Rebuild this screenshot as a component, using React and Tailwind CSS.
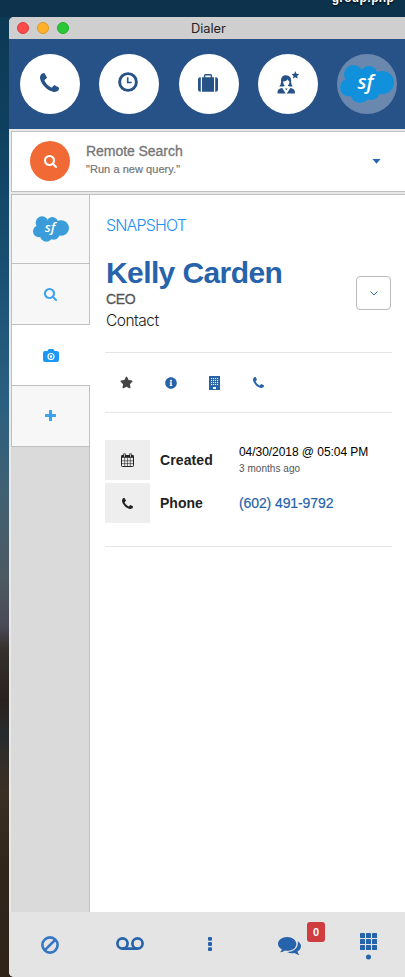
import React from "react";
import { FaStar, FaInfoCircle } from "react-icons/fa";

const PHONE =
  "M1408 1112q0 27-10 70.5t-21 68.5q-21 50-122 106-94 51-186 51-27 0-53-3.5t-57-12.5-47-14.5-55.5-20.5-49.5-18q-98-35-175-83-127-79-264-216t-216-264q-48-77-83-175-3-9-18-49.5t-20.5-55.5-14.5-47-12.5-57-3.5-53q0-92 51-186 56-101 106-122 25-11 68.5-21t70.5-10q14 0 21 3 18 6 53 76 11 19 30 54t35 63.5 31 53.5q3 4 17.5 25t21.5 35.5 7 28.5q0 20-28.5 50t-62 55-62 53-28.5 46q0 9 5 22.5t8.5 20.5 14 24 11.5 19q76 137 174 235t235 174q2 1 19 11.5t24 14 20.5 8.5 22.5 5q18 0 46-28.5t53-62 55-62 50-28.5q14 0 28.5 7t35.5 21.5 25 17.5q25 15 53.5 31t63.5 35 54 30q70 35 76 53 3 7 3 21z";

const SEARCH =
  "M1216 832q0-185-131.5-316.5t-316.5-131.5-316.5 131.5-131.5 316.5 131.5 316.5 316.5 131.5 316.5-131.5 131.5-316.5zm512 832q0 52-38 90t-90 38q-54 0-90-38l-343-342q-179 124-399 124-143 0-273.5-55.5t-225-150-150-225-55.5-273.5 55.5-273.5 150-225 225-150 273.5-55.5 273.5 55.5 225 150 150 225 55.5 273.5q0 220-124 399l343 343q37 37 37 90z";

function Phone({ className }) {
  return (
    <svg viewBox="0 0 1408 1408" className={className} fill="currentColor">
      <path d={PHONE} />
    </svg>
  );
}

function Search({ className }) {
  return (
    <svg viewBox="64 128 1664 1664" className={className} fill="currentColor">
      <path d={SEARCH} />
    </svg>
  );
}

function Clock() {
  return (
    <svg viewBox="0 0 20 20" className="size-5" fill="none" stroke="currentColor">
      <circle cx="10" cy="10" r="8.4" strokeWidth="2.9" />
      <path d="M9.7 5.2v5.3h4" strokeWidth="1.6" />
    </svg>
  );
}

function Suitcase() {
  return (
    <svg viewBox="0 0 20 18" className="mt-0.5 h-[18px] w-5" fill="currentColor">
      <path d="M6.6 4V1.6Q6.6.7 7.5.7h5q.9 0 .9.9V4" fill="none" stroke="currentColor" strokeWidth="1.4" />
      <path d="M2.8 3.3v14.4H2.2Q0 17.700 0 15.500V5.500Q0 3.300 2.200 3.300zM4 3.300h12v14.400H4zM17.200 3.300h.6Q20 3.300 20 5.500v10q0 2.200-2.200 2.200h-.6z" />
    </svg>
  );
}

function Agent() {
  return (
    <svg viewBox="0 0 22 23" className="h-[23px] w-[22px]" fill="currentColor">
      <path d="M9 4.300C5.600 4.200 4.100 6.400 4.100 9.500c0 2-.1 4.100-1.800 6h4.200l1.300-1.100C6.600 13.400 6.100 12 6.100 10.400c2.600-.1 3.900-1 4.700-2.200.3 1.200 1 1.900 1.700 2.200 0 1.600-.6 3-1.700 4l1.200 1.100h3.700c-1.500-2-1.600-4-1.600-6 0-3.300-1.700-5.100-5.100-5.200z" />
      <path d="M.5 22.500c0-3.700.8-4.400 4.700-5.400l3.500 5.400zM18 22.500c0-3.700-.8-4.400-4.700-5.400l-3.500 5.400zM8 17.600h2.600l-1.300 1.600z" />
      <path d="M18.300.300l1.200 2.500 2.600.3-1.900 1.800.5 2.600-2.400-1.200L16 7.500l.5-2.600-1.900-1.800 2.600-.3z" />
    </svg>
  );
}

function SfLogo({ className, fill }) {
  return (
    <svg viewBox="0 0 54 38" className={className}>
      <g fill={fill}>
        <circle cx="13.500" cy="9.500" r="9.500" />
        <circle cx="29" cy="9.500" r="8.500" />
        <ellipse cx="42" cy="17.500" rx="12" ry="11.500" />
        <circle cx="9" cy="22.500" r="9" />
        <circle cx="20" cy="28.500" r="9.500" />
        <circle cx="31" cy="26" r="9" />
        <rect x="12" y="9" width="28" height="20" />
      </g>
      <text x="25.500" y="23.500" textAnchor="middle" fill="#fff" fontFamily="'Open Sans', sans-serif" fontSize="20" fontStyle="italic" fontWeight="600">
        sf
      </text>
    </svg>
  );
}

function Camera() {
  return (
    <svg viewBox="0 0 16 13" className="h-[13px] w-4" fill="currentColor">
      <path fillRule="evenodd" d="M2 2h2.500L5.200.6Q5.500 0 6.200 0h3.600q.7 0 1 .6L11.500 2H14q2 0 2 2v7q0 2-2 2H2q-2 0-2-2V4q0-2 2-2zM8 3.900a3.600 3.600 0 100 7.200 3.600 3.600 0 000-7.200z" />
      <circle cx="8" cy="7.500" r="1.800" fill="none" stroke="currentColor" strokeWidth="1.200" />
    </svg>
  );
}

function Building() {
  return (
    <svg viewBox="0 0 11 14" className="h-3.5 w-[11px]">
      <rect width="11" height="14" fill="currentColor" />
      <g fill="#fff">
        {[2, 4, 6, 8].map((y) => [2, 4, 6, 8].map((x) => <rect key={x + "-" + y} x={x} y={y} width="1.100" height="1.100" />))}
        <rect x="4" y="11" width="3" height="2" />
      </g>
    </svg>
  );
}

function Calendar() {
  return (
    <svg viewBox="0 0 13 14" className="h-3.5 w-[13px]" fill="none" stroke="currentColor">
      <rect x=".5" y="2.500" width="12" height="11" rx=".8" />
      <path d="M.5 3.500h12" strokeWidth="2.600" />
      <path d="M3.700 5v8.500M6.500 5v8.500M9.300 5v8.500M.5 7.800h12M.5 10.600h12" strokeWidth=".6" />
      <path d="M3.500 4V.6M9.500 4V.6" strokeWidth="2.400" />
      <path d="M3.500 3.800V1.200M9.500 3.800V1.200" stroke="#eee" strokeWidth=".8" />
    </svg>
  );
}

function Chats() {
  return (
    <svg viewBox="0 0 24 19" className="h-[19px] w-6" fill="currentColor">
      <path d="M9.200 0c5 0 9.100 3 9.100 6.900s-4.100 6.900-9.100 6.900c-.8 0-1.600-.1-2.400-.2-1.400 1-2.900 1.600-4.800 1.700 1-1 1.700-1.800 1.900-3C1.500 11 0 9.100 0 6.900 0 3 4.100 0 9.200 0z" />
      <path d="M19.700 4.200c2 1.200 3.300 3 3.300 5 0 2.100-1.400 4-3.500 5.200.3 1.500 1 2.400 2.200 3.600-2-.2-3.600-.8-5-2-2.700.5-5.600 0-7.600-1.100 6.500.1 11.800-4.200 10.600-10.700z" />
    </svg>
  );
}

const DIGITS = [0, 1, 2];

export default function App() {
  return (
    <div className="flex h-[977px] w-[405px] flex-col overflow-hidden bg-[linear-gradient(180deg,#0b3852_0px,#0f405f_130px,#184f70_260px,#2a5f80_400px,#406073_490px,#4c5961_580px,#4a4a55_626px,#35312c_650px,#29231e_700px,#272b2d_735px,#3b3024_790px,#30261a_870px,#302419_977px)] font-['Liberation_Sans',Arial,sans-serif]">
      <div className="flex h-[17px] shrink-0 justify-end bg-[#0c334b] pr-[11px]">
        <span className="-mt-[10px] h-5 text-[12px] leading-4 font-bold tracking-[0.250px] text-white [text-shadow:0_1px_2px_#000]">group!php</span>
      </div>
      <div className="ml-[9px] flex w-[396px] flex-1 flex-col overflow-hidden rounded-l-[5px] bg-[#e8e8e8]">
        <div className="flex h-[22px] shrink-0 items-center bg-[#cfcfcf] pl-2">
          <div className="flex gap-2">
            <i className="size-3 rounded-full border border-[#e2383a] bg-[#fc4b4b]" />
            <i className="size-3 rounded-full border border-[#e09a1e] bg-[#fdb12b]" />
            <i className="size-3 rounded-full border border-[#1fae2b] bg-[#2ac837]" />
          </div>
          <span className="ml-[122px] pt-px font-['Inter',sans-serif] text-[12.800px] leading-[22px] text-[#222]">Dialer</span>
        </div>

        <nav className="flex h-[90px] w-[409px] shrink-0 items-center gap-[19.350px] bg-[#275288] pl-[11px] text-[#275288]">
          <div className="flex size-[60px] shrink-0 items-center justify-center rounded-full bg-white pr-0.5 pb-1">
            <Phone className="size-[19px]" />
          </div>
          <div className="flex size-[60px] shrink-0 items-center justify-center rounded-full bg-white pr-0.5 pb-1">
            <Clock />
          </div>
          <div className="flex size-[60px] shrink-0 items-center justify-center rounded-full bg-white pr-px pb-1">
            <Suitcase />
          </div>
          <div className="flex size-[60px] shrink-0 items-center justify-center rounded-full bg-white pr-px pb-1">
            <Agent />
          </div>
          <div className="flex size-[60px] shrink-0 items-center justify-center rounded-full bg-[#6a88ae]">
            <SfLogo className="h-[38px] w-[54px]" fill="#1190dc" />
          </div>
        </nav>

        <section className="mt-0.5 ml-0.5 flex h-[61px] shrink-0 items-center border border-r-0 border-[#c0c0c0] bg-white pb-px pl-[18px]">
          <div className="flex size-10 items-center justify-center rounded-full bg-[#f16a36] text-white">
            <Search className="size-[13px]" />
          </div>
          <div className="ml-4 w-[286px] pb-1 text-[#757575]">
            <div className="text-[14px] leading-[20px] tracking-[-0.050px] [-webkit-text-stroke:0.3px]">Remote Search</div>
            <div className="text-[11px] leading-[17px] tracking-[0.050px] [-webkit-text-stroke:0.2px]">"Run a new query."</div>
          </div>
          <svg viewBox="0 0 8 5" className="h-[5px] w-[9px] fill-[#2765ad]">
            <path d="M0 0h8L4 4.800z" />
          </svg>
        </section>

        <div className="mt-0.5 ml-0.5 flex flex-1 border-t border-[#c0c0c0]">
          <aside className="flex w-[79px] shrink-0 flex-col text-[#3ba3ee]">
            <div className="flex h-[69px] items-center justify-center border-r border-b border-l border-[#c0c0c0] bg-[#f7f7f7]">
              <SfLogo className="h-[26px] w-9" fill="#3b9cda" />
            </div>
            <div className="flex h-[61px] items-center justify-center border-r border-b border-l border-[#c0c0c0] bg-[#f7f7f7]">
              <Search className="size-[13px]" />
            </div>
            <div className="flex h-[61px] items-center justify-center border-b border-l border-[#c0c0c0] bg-white text-[#1b98f5]">
              <Camera />
            </div>
            <div className="flex h-[61px] items-center justify-center border-r border-b border-l border-[#c0c0c0] bg-[#f7f7f7] pb-px">
              <svg viewBox="0 0 11 11" className="size-[11px] fill-current">
                <rect x="4" width="3" height="11" rx=".6" />
                <rect y="4" width="11" height="3" rx=".6" />
              </svg>
            </div>
            <div className="flex-1 border-r border-[#c0c0c0] bg-[#dadada]" />
          </aside>

          <main className="w-[315px] bg-white pr-[13px] pl-[15px]">
            <h2 className="mt-[19px] ml-px font-['Inter',sans-serif] text-[16px] leading-[22px] font-light tracking-[-0.850px] text-[#2090f2]">SNAPSHOT</h2>
            <div className="mt-[19px] ml-px flex items-start justify-between">
              <div>
                <h1 className="text-[30px] leading-9 font-bold tracking-[-0.600px] text-[#2763aa]">Kelly Carden</h1>
                <div className="-mt-px text-[14px] leading-[18px] tracking-[-0.300px] text-[#555] [-webkit-text-stroke:0.3px]">CEO</div>
                <div className="mt-0.5 font-['Inter',sans-serif] text-[15.500px] leading-[22px] font-light tracking-[-0.500px] text-[#222]">Contact</div>
              </div>
              <button className="mt-[21px] mr-px flex h-[34px] w-[35px] items-center justify-center rounded-[4px] border border-[#bbb]">
                <svg viewBox="0 0 8 5" className="h-[5px] w-2 fill-none stroke-[#3773b8]">
                  <path d="M.5.5L4 4 7.500.5" />
                </svg>
              </button>
            </div>

            <div className="mt-5 flex h-[61px] items-center border-t border-b border-[#e6e6e6] pl-[15px] text-[#2763aa]">
              <FaStar className="size-[13px] text-[#444]" />
              <FaInfoCircle className="ml-8 size-3" />
              <span className="ml-8">
                <Building />
              </span>
              <Phone className="ml-[33px] size-[11px]" />
            </div>

            <div className="mt-[27px] flex flex-col gap-[3px] border-b border-[#e6e6e6] pb-[23px]">
              <div className="flex h-10 items-center">
                <div className="flex h-10 w-[45px] items-center justify-center bg-[#eee] text-[#222]">
                  <Calendar />
                </div>
                <div className="w-[79px] pl-2.5 text-[14px] font-bold tracking-[0.100px] text-[#222]">Created</div>
                <div className="ml-2.5">
                  <div className="text-[12px] leading-[18px] tracking-[-0.050px] whitespace-nowrap text-black">04/30/2018 @ 05:04 PM</div>
                  <div className="text-[10px] leading-[16px] tracking-[0.050px] text-[#555]">3 months ago</div>
                </div>
              </div>
              <div className="flex h-10 items-center">
                <div className="flex h-10 w-[45px] items-center justify-center bg-[#eee] text-[#222]">
                  <Phone className="size-[11px]" />
                </div>
                <div className="w-[79px] pl-2.5 text-[14px] font-bold text-[#222]">Phone</div>
                <div className="ml-2.5 text-[14px] tracking-[-0.100px] text-[#2763aa] [-webkit-text-stroke:0.2px]">(602) 491-9792</div>
              </div>
            </div>
          </main>
        </div>

        <footer className="flex h-[65px] shrink-0 items-center bg-[#e4e4e4] pl-8 text-[#2763aa]">
          <svg viewBox="0 0 18 18" className="mt-px size-[18px] fill-none stroke-[#3476c4]" strokeWidth="2.600">
            <circle cx="9" cy="9" r="7.600" />
            <path d="M3.800 14.200L14.200 3.800" />
          </svg>
          <svg viewBox="0 0 28 13" className="mb-[3px] ml-[57px] h-[13px] w-7 fill-none stroke-current" strokeWidth="2.700">
            <circle cx="6.500" cy="6.500" r="5.100" />
            <circle cx="21.500" cy="6.500" r="5.100" />
            <path d="M6.500 11.600h15" />
          </svg>
          <svg viewBox="0 0 4 14" className="mb-0.5 ml-16 h-3.5 w-1 fill-current">
            <rect width="4" height="3.800" rx="1" />
            <rect y="5.100" width="4" height="3.800" rx="1" />
            <rect y="10.200" width="4" height="3.800" rx="1" />
          </svg>
          <div className="relative mt-1 ml-[66px]">
            <Chats />
            <span className="absolute -top-[15px] left-[29px] flex h-5 w-[18px] items-center justify-center rounded-[3px] bg-[#cf3d40] text-[11px] font-bold text-white">0</span>
          </div>
          <svg viewBox="0 0 17 27" className="mt-1 ml-[58px] h-[27px] w-[17px] fill-current">
            {DIGITS.map((r) => DIGITS.map((c) => <rect key={r + "-" + c} x={c * 6} y={r * 6} width="5" height="5" rx=".6" />))}
            <circle cx="8.500" cy="24" r="2.500" />
          </svg>
        </footer>
      </div>
    </div>
  );
}
